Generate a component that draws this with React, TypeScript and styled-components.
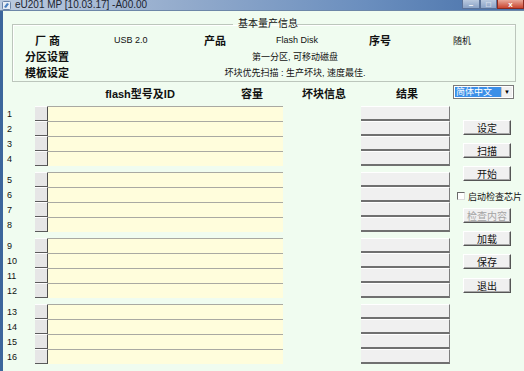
import styled, { createGlobalStyle } from 'styled-components'

const GlobalStyle = createGlobalStyle`
  html, body {
    margin: 0;
    padding: 0;
    background: #f0fcf0;
  }
  body {
    font-family: "Liberation Sans", "Noto Sans CJK SC", sans-serif;
    font-size: 10px;
    color: #111;
  }
`

const Window = styled.div`
  width: 524px;
  height: 371px;
  overflow: hidden;
  background: #f0fcf0;
  display: flex;
  flex-direction: column;
`

const TitleBar = styled.div`
  height: 10px;
  flex: none;
  display: flex;
  align-items: center;
  background: linear-gradient(to right, #bccbe0 0%, #93abcc 35%, #6a8ebe 70%, #4670a9 100%);
  border-bottom: 1px solid #6d87a8;
`

const AppIcon = styled.svg`
  width: 9px;
  height: 9px;
  margin: 0 4px 0 2px;
`

const TitleText = styled.span`
  font-size: 10px;
  line-height: 10px;
  color: #1c2430;
  flex: 1;
  white-space: nowrap;
`

const CaptionButton = styled.div<{ $w: number; $close?: boolean }>`
  width: ${p => p.$w}px;
  height: 9px;
  align-self: flex-start;
  box-sizing: border-box;
  border: 1px solid ${p => (p.$close ? '#8a2a20' : '#5a7198')};
  border-top: none;
  background: ${p =>
    p.$close
      ? 'linear-gradient(#e9a99a, #c8452f)'
      : 'linear-gradient(#b9c9df, #8aa2c6)'};
  display: flex;
  align-items: center;
  justify-content: center;
  color: #fff;
  font-size: 8px;
  font-weight: bold;
`

const Frame = styled.div`
  flex: 1;
  display: flex;
  flex-direction: column;
  border-left: 3px solid #3c669c;
`

const InfoGroup = styled.fieldset`
  margin: 7px 0 0 9px;
  width: 504px;
  box-sizing: border-box;
  padding: 2px 0 1px 0;
  border: 1px solid #bcc6bc;
  box-shadow: inset 1px 1px 0 #fff;
`

const InfoTitle = styled.legend`
  margin: 0 auto;
  padding: 0 1px;
  font-size: 10px;
  line-height: 12px;
  transform: translateX(4px);
`

const InfoRow = styled.div`
  display: flex;
  height: 16px;
  align-items: center;
`

const InfoCell = styled.div<{ $w: number; $pad?: number; $bold?: boolean; $center?: boolean }>`
  width: ${p => p.$w}px;
  flex: none;
  box-sizing: border-box;
  padding-left: ${p => p.$pad ?? 0}px;
  font-size: ${p => (p.$bold ? 11 : 9)}px;
  font-weight: ${p => (p.$bold ? 'bold' : 'normal')};
  text-align: ${p => (p.$center ? 'center' : 'left')};
  white-space: nowrap;
`

const Header = styled.div`
  display: flex;
  align-items: center;
  height: 19px;
  margin-top: 1px;
`

const HeaderCell = styled.div<{ $w: number }>`
  width: ${p => p.$w}px;
  flex: none;
  text-align: center;
  font-size: 11px;
  font-weight: bold;
  white-space: nowrap;
`

const Select = styled.div`
  width: 61px;
  height: 14px;
  margin: -2px 0 0 15px;
  box-sizing: border-box;
  border: 1px solid #7a7a7a;
  background: #fff;
  display: flex;
  padding: 1px;
`

const SelectValue = styled.div`
  flex: 1;
  background: #3b8fe8;
  color: #fff;
  font-size: 9px;
  line-height: 10px;
  padding-left: 1px;
`

const SelectArrow = styled.div`
  width: 10px;
  display: flex;
  align-items: center;
  justify-content: center;
  background: #f0f0f0;
  border-left: 1px solid #c8c8c8;
  font-size: 6px;
  color: #000;
`

const Main = styled.div`
  display: flex;
  align-items: flex-start;
  margin-top: 4px;
`

const Slots = styled.div`
  display: flex;
  flex-direction: column;
  gap: 6px;
`

const SlotGroup = styled.div`
  display: flex;
  flex-direction: column;
`

const Row = styled.div`
  display: flex;
  height: 15px;
`

const Num = styled.div`
  width: 32px;
  box-sizing: border-box;
  padding-left: 4px;
  display: flex;
  align-items: center;
  font-size: 9px;
  padding-top: 1px;
`

const SlotButton = styled.div`
  width: 13px;
  box-sizing: border-box;
  background: #e6e6e6;
  border-top: 1px solid #fdfdfd;
  border-right: 1px solid #4d4d4d;
  border-bottom: 1px solid #5a5a5a;
`

const Field = styled.div`
  width: 235px;
  background: #fffddc;
  border-top: 1px solid #a9a9a2;
  box-sizing: border-box;
`

const Result = styled.div`
  width: 89px;
  margin-left: 78px;
  box-sizing: border-box;
  background: #f0f0f0;
  border-top: 1px solid #fff;
  border-right: 1px solid #7d7d7d;
  border-bottom: 2px solid #707070;
`

const Controls = styled.div`
  display: flex;
  flex-direction: column;
  margin-left: 7px;
  padding-top: 14px;
`

const PushButton = styled.div<{ $top?: number; $disabled?: boolean }>`
  width: 48px;
  height: 15px;
  margin: ${p => p.$top ?? 0}px 0 0 6px;
  box-sizing: border-box;
  background: #f0f0f0;
  border: 1px solid;
  border-color: #fff #555 #555 #fff;
  box-shadow: inset -1px -1px 0 #a8a8a8;
  display: flex;
  align-items: center;
  justify-content: center;
  font-size: 10px;
  color: ${p => (p.$disabled ? '#a4a4a4' : '#111')};
`

const CheckRow = styled.div`
  display: flex;
  align-items: center;
  height: 10px;
  margin-top: 10px;
  gap: 3px;
`

const CheckBox = styled.div`
  width: 8px;
  height: 8px;
  box-sizing: border-box;
  border: 1px solid #6a6a6a;
  border-right-color: #ddd;
  border-bottom-color: #ddd;
  background: #fff;
`

const CheckLabel = styled.span`
  font-size: 9px;
  white-space: nowrap;
`

const groups = [[1, 2, 3, 4], [5, 6, 7, 8], [9, 10, 11, 12], [13, 14, 15, 16]]

export default function App() {
  return (
    <Window>
      <GlobalStyle />
      <TitleBar>
        <AppIcon viewBox="0 0 9 9">
          <rect x="0.5" y="0.5" width="8" height="8" rx="1" fill="#e8eef6" stroke="#6c84a8" />
          <path d="M2 6 L5 2 L7 3 L4 7 Z" fill="#4a7fc0" />
        </AppIcon>
        <TitleText>eU201 MP [10.03.17] -A00.00</TitleText>
        <CaptionButton $w={18}>–</CaptionButton>
        <CaptionButton $w={17}>□</CaptionButton>
        <CaptionButton $w={27} $close>x</CaptionButton>
      </TitleBar>
      <Frame>
        <InfoGroup>
          <InfoTitle>基本量产信息</InfoTitle>
          <InfoRow>
            <InfoCell $w={101} $pad={22} $bold>厂 商</InfoCell>
            <InfoCell $w={90}>USB 2.0</InfoCell>
            <InfoCell $w={72} $bold>产品</InfoCell>
            <InfoCell $w={93}>Flash Disk</InfoCell>
            <InfoCell $w={84} $bold>序号</InfoCell>
            <InfoCell $w={60}>随机</InfoCell>
          </InfoRow>
          <InfoRow>
            <InfoCell $w={100} $pad={12} $bold>分区设置</InfoCell>
            <InfoCell $w={364} $center>第一分区, 可移动磁盘</InfoCell>
          </InfoRow>
          <InfoRow>
            <InfoCell $w={100} $pad={12} $bold>模板设定</InfoCell>
            <InfoCell $w={364} $center>坏块优先扫描 : 生产坏块, 速度最佳.</InfoCell>
          </InfoRow>
        </InfoGroup>
        <Header>
          <HeaderCell $w={45} />
          <HeaderCell $w={184}>flash型号及ID</HeaderCell>
          <HeaderCell $w={40}>容量</HeaderCell>
          <HeaderCell $w={104}>坏块信息</HeaderCell>
          <HeaderCell $w={62}>结果</HeaderCell>
          <Select>
            <SelectValue>简体中文</SelectValue>
            <SelectArrow>▼</SelectArrow>
          </Select>
        </Header>
        <Main>
          <Slots>
            {groups.map((g, gi) => (
              <SlotGroup key={gi}>
                {g.map(n => (
                  <Row key={n}>
                    <Num>{n}</Num>
                    <SlotButton />
                    <Field />
                    <Result />
                  </Row>
                ))}
              </SlotGroup>
            ))}
          </Slots>
          <Controls>
            <PushButton>设定</PushButton>
            <PushButton $top={8}>扫描</PushButton>
            <PushButton $top={8}>开始</PushButton>
            <CheckRow>
              <CheckBox />
              <CheckLabel>启动检查芯片</CheckLabel>
            </CheckRow>
            <PushButton $top={7} $disabled>检查内容</PushButton>
            <PushButton $top={8}>加载</PushButton>
            <PushButton $top={8}>保存</PushButton>
            <PushButton $top={9}>退出</PushButton>
          </Controls>
        </Main>
      </Frame>
    </Window>
  )
}
